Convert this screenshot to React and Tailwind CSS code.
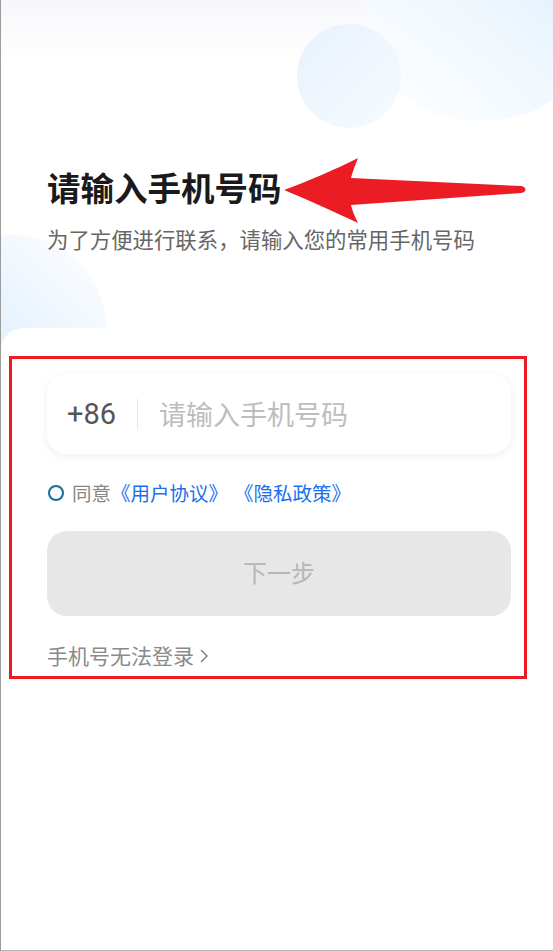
import { useState } from 'react';

const cjk = { fontFamily: '"Noto Sans CJK SC", "Noto Sans", sans-serif' };

function Arrow() {
  return (
    <svg width="250" height="72" viewBox="0 0 250 72" className="absolute left-[280px] top-[155px]">
      <path
        d="M3 35 C 28 26, 55 14, 77 3 C 74 11, 71 18, 70 23 L 240 31 C 246 32, 246 37, 240 38 L 70 50 C 71 55, 74 62, 77 68 C 55 58, 28 45, 3 35 Z"
        fill="#ec1c24"
      />
    </svg>
  );
}

function PhoneForm() {
  const [phone, setPhone] = useState('');
  const [agreed, setAgreed] = useState(false);

  return (
    <div className="ml-[8px] w-[518px] border-[3px] border-[#ec1c24] pl-[35px] pt-[15px] pb-[6px]">
      <div className="w-[464px] h-[80px] rounded-[20px] bg-white shadow-[0_2px_10px_rgba(0,0,0,0.07)] flex items-center pl-[20px] pr-[21px]">
        <span className="text-[29px] text-[#555] leading-none" style={{ fontFamily: 'Roboto, "Liberation Sans", sans-serif' }}>+86</span>
        <div className="w-px h-[30px] bg-[#e4e4e4] mx-[21px]" />
        <input
          value={phone}
          onChange={(e) => setPhone(e.target.value)}
          placeholder="请输入手机号码"
          className="flex-1 min-w-0 outline-none bg-transparent text-[27px] text-[#333] placeholder:text-[#bdbdbd]"
          style={cjk}
        />
      </div>

      <div className="mt-[25px] h-[28px] flex items-center text-[19.5px]" style={cjk}>
        <button
          onClick={() => setAgreed(!agreed)}
          className={'w-[16px] h-[16px] rounded-full border-2 border-[#136c99] ml-[1px] mr-[8px] ' + (agreed ? 'bg-[#136c99]' : '')}
        />
        <span className="text-[#888]">同意</span>
        <span className="text-[#1a6ff0]">《用户协议》</span>
        <span className="text-[#1a6ff0] ml-[6px]">《隐私政策》</span>
      </div>

      <button
        className="mt-[24px] w-[464px] h-[85px] rounded-[20px] bg-[#e7e7e7] text-[24px] text-[#b6b6b6] flex items-center justify-center pb-[4px]"
        style={cjk}
      >
        下一步
      </button>

      <div className="mt-[26px] h-[28px] flex items-center text-[21px] text-[#8a8a8a]" style={cjk}>
        <span>手机号无法登录</span>
        <svg width="14" height="20" viewBox="0 0 14 20" className="ml-[3px]">
          <path d="M4 4 L10 10 L4 16" fill="none" stroke="#8a8a8a" strokeWidth="1.6" />
        </svg>
      </div>
    </div>
  );
}

export default function App() {
  return (
    <div className="relative w-full h-[951px] overflow-hidden bg-white border-l border-[#9c9c9c]">
      {/* background decorations */}
      <div className="absolute inset-x-0 top-0 h-[60px] bg-gradient-to-b from-[#f6f7fa] to-white" />
      <div className="absolute left-[365px] top-[-90px] w-[230px] h-[210px] rounded-full bg-gradient-to-bl from-[#d9e9fc] via-[#eef7fe] to-white opacity-90" />
      <div className="absolute left-[296px] top-[24px] w-[104px] h-[104px] rounded-full bg-gradient-to-br from-[#e8f1fc] to-[#f6fbff]" />
      <div className="absolute left-[-80px] top-[235px] w-[185px] h-[185px] rounded-full bg-gradient-to-tr from-[#cfe2fb] via-[#e8f3fe] to-white" />

      <div className="relative">
        <div className="pt-[167px] pl-[46px]">
          <h1 className="text-[33.5px] font-bold text-[#1a1a1a] leading-[40px]" style={cjk}>请输入手机号码</h1>
          <p className="mt-[17px] text-[21.4px] text-[#666] leading-[30px]" style={cjk}>为了方便进行联系，请输入您的常用手机号码</p>
        </div>
        <Arrow />

        <div className="mt-[74px] bg-white rounded-tl-[22px] pt-[28px] h-[623px]">
          <PhoneForm />
        </div>
      </div>
      <div className="absolute inset-x-0 bottom-0 h-px bg-[#b5b5b5]" />
    </div>
  );
}
